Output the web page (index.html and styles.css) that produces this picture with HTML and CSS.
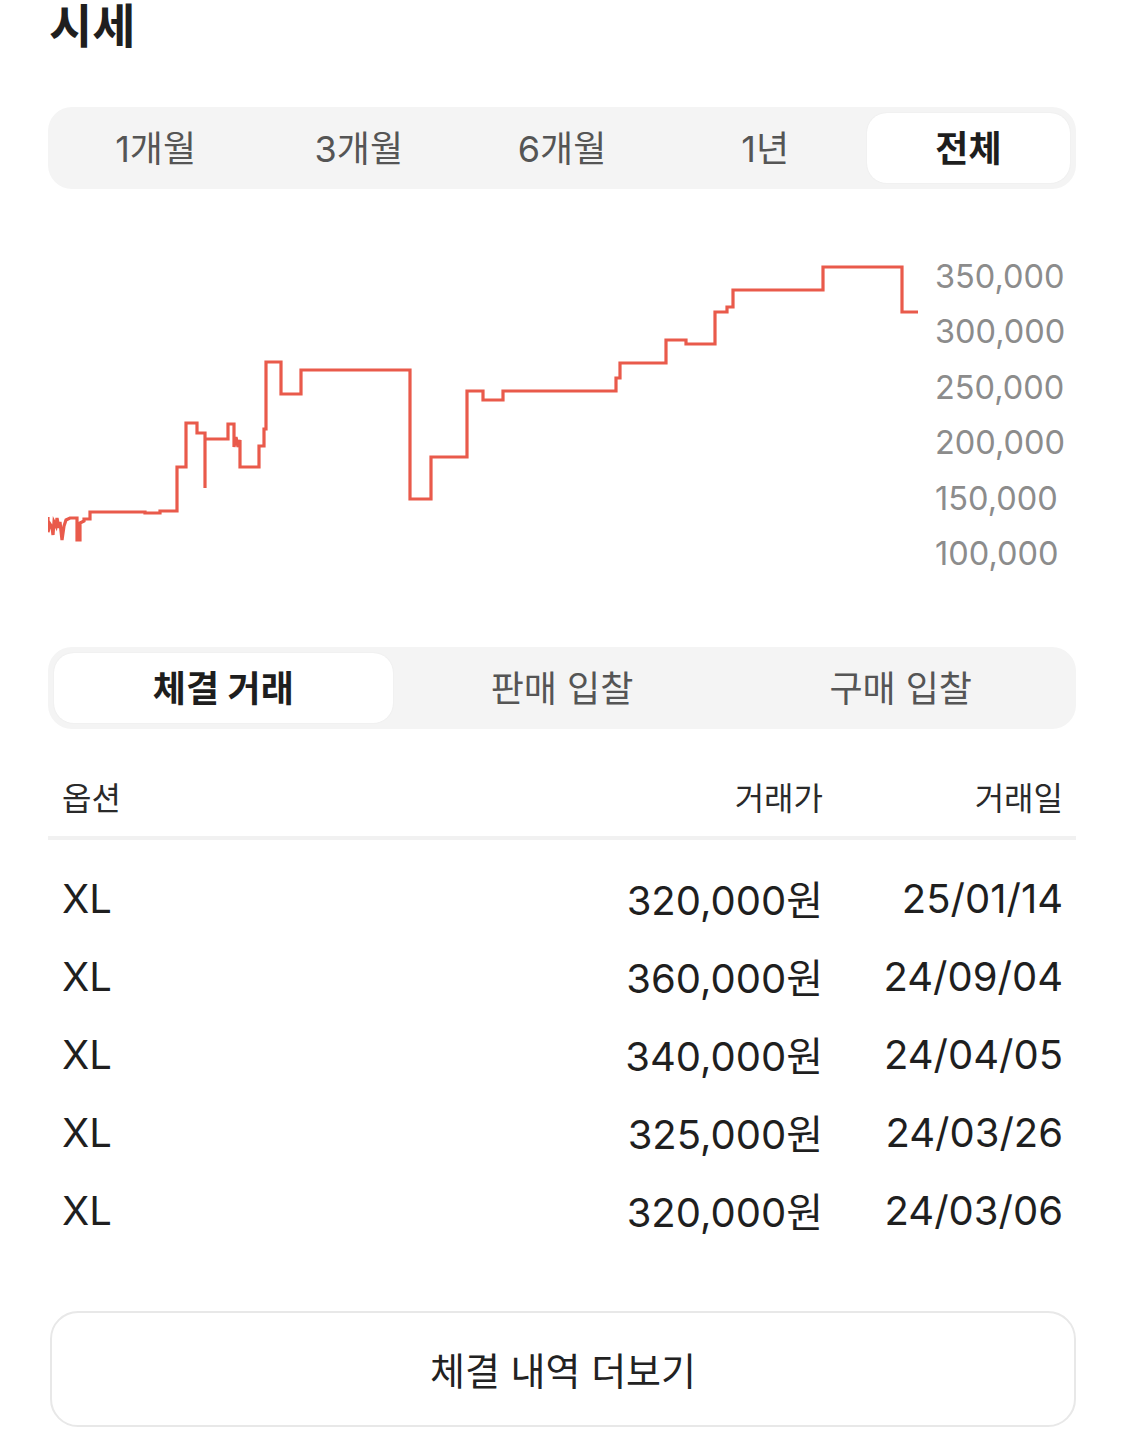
FILE: index.html
```html
<!DOCTYPE html>
<html lang="ko">
<head>
<meta charset="utf-8">
<link rel="stylesheet" href="styles.css">
</head>
<body>
<main class="page">
  <h1 class="title">시세</h1>

  <div class="seg seg-period">
    <div class="seg-item">1개월</div>
    <div class="seg-item">3개월</div>
    <div class="seg-item">6개월</div>
    <div class="seg-item">1년</div>
    <div class="seg-item active">전체</div>
  </div>

  <div class="chart">
    <svg class="chart-svg" viewBox="48 230 872 370" width="872" height="370">
      <path class="line" d="M48,517 L48,532 L50,524 L52,527 L53,535 L54,522 L56,526 L57,518 L59,528 L60,522 L62,540 L64,526 L66,520 L70,518 L77,518 L77,540 L80,540 L80,523 L84,521 L84,519 L90,519 L90,512 L145,512 L145,513 L160,513 L160,511 L177,511 L177,467 L186,467 L186,423 L197,423 L197,433 L205,433 L205,488 L205,439 L228,439 L228,424 L234,424 L234,447 L236,437 L238,447 L240,440 L240,467 L259,467 L259,446 L264,446 L264,429 L266,429 L266,362 L281,362 L281,394 L301,394 L301,370 L410,370 L410,499 L431,499 L431,457 L467,457 L467,391 L483,391 L483,400 L503,400 L503,391 L616,391 L616,378 L620,378 L620,363 L666,363 L666,340 L686,340 L686,344 L715,344 L715,312 L727,312 L727,307 L733,307 L733,290 L823,290 L823,267 L902,267 L902,312 L918,312"/>
    </svg>
    <div class="axis">
      <div class="tick">350,000</div>
      <div class="tick">300,000</div>
      <div class="tick">250,000</div>
      <div class="tick">200,000</div>
      <div class="tick">150,000</div>
      <div class="tick">100,000</div>
    </div>
  </div>

  <div class="seg seg-type">
    <div class="seg-item active">체결 거래</div>
    <div class="seg-item">판매 입찰</div>
    <div class="seg-item">구매 입찰</div>
  </div>

  <div class="table">
    <div class="row head">
      <div class="c-opt">옵션</div>
      <div class="c-price">거래가</div>
      <div class="c-date">거래일</div>
    </div>
    <div class="rows">
      <div class="row">
        <div class="c-opt">XL</div>
        <div class="c-price">320,000원</div>
        <div class="c-date">25/01/14</div>
      </div>
      <div class="row">
        <div class="c-opt">XL</div>
        <div class="c-price">360,000원</div>
        <div class="c-date">24/09/04</div>
      </div>
      <div class="row">
        <div class="c-opt">XL</div>
        <div class="c-price">340,000원</div>
        <div class="c-date">24/04/05</div>
      </div>
      <div class="row">
        <div class="c-opt">XL</div>
        <div class="c-price">325,000원</div>
        <div class="c-date">24/03/26</div>
      </div>
      <div class="row">
        <div class="c-opt">XL</div>
        <div class="c-price">320,000원</div>
        <div class="c-date">24/03/06</div>
      </div>
    </div>
  </div>

  <button class="more">체결 내역 더보기</button>
</main>
</body>
</html>
```

FILE: styles.css
```css
* { box-sizing: border-box; }

html, body {
  margin: 0;
  padding: 0;
  background: #ffffff;
}

body {
  width: 1125px;
  height: 1432px;
  overflow: hidden;
  font-family: Inter, "Noto Sans CJK KR", sans-serif;
  color: #222222;
}

.page {
  padding: 0 49px 0 48px;
}

.title {
  margin: 0;
  height: 52px;
  line-height: 52px;
  font-size: 47px;
  font-weight: 700;
  color: #1f1f1f;
  padding-left: 1px;
}

.seg {
  display: flex;
  background: #f4f4f4;
  border-radius: 24px;
  padding: 6px;
}

.seg-period {
  margin-top: 55px;
  height: 82px;
}

.seg-item {
  flex: 1 1 0;
  display: flex;
  align-items: center;
  justify-content: center;
  font-size: 36px;
  color: #555555;
  border-radius: 20px;
  padding-bottom: 4px;
}

.seg-item.active {
  background: #ffffff;
  color: #1e1e1e;
  font-weight: 700;
  box-shadow: 0 0 2px rgba(0, 0, 0, 0.06);
}

.chart {
  display: flex;
  margin-top: 41px;
  height: 370px;
}

.chart-svg {
  display: block;
  flex: 0 0 872px;
}

.line {
  fill: none;
  stroke: #e95a4b;
  stroke-width: 3.2;
  stroke-linejoin: miter;
}

.axis {
  display: flex;
  flex-direction: column;
  padding-top: 19px;
  padding-left: 15px;
}

.tick {
  height: 55.4px;
  line-height: 55.4px;
  font-size: 32.5px;
  color: #8c8c8c;
}

.seg-type {
  margin-top: 47px;
  height: 82px;
}

.table {
  margin-top: 40px;
}

.row {
  display: grid;
  grid-template-columns: 1fr 240px 240px;
  padding: 0 13px 0 14px;
  align-items: center;
}

.row .c-price,
.row .c-date {
  text-align: right;
}

.row.head {
  height: 71px;
  padding-bottom: 14px;
  font-size: 32px;
  color: #2a2a2a;
  border-bottom: 4px solid #f1f1f1;
  margin-bottom: 19px;
}

.rows .row {
  height: 78px;
  font-size: 40px;
  color: #1f1f1f;
}

.more {
  display: flex;
  align-items: center;
  justify-content: center;
  margin: 62px 0 0 2px;
  width: 1026px;
  height: 116px;
  background: #ffffff;
  border: 2px solid #e8e8e8;
  border-radius: 28px;
  font-family: Inter, "Noto Sans CJK KR", sans-serif;
  font-size: 38px;
  color: #222222;
  padding-bottom: 2px;
}
```
